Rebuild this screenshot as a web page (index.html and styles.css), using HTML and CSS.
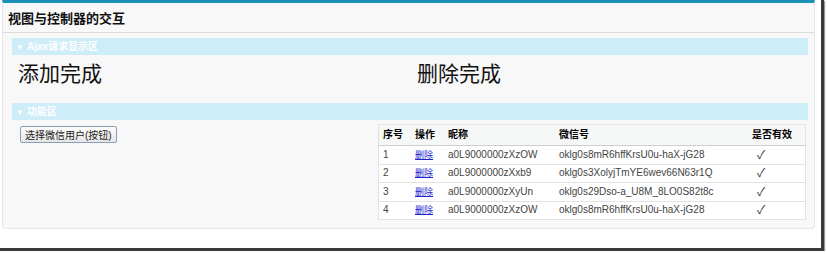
FILE: index.html
```html
<!DOCTYPE html>
<html lang="zh-CN">
  <head>
    <meta charset="UTF-8" />
    <meta name="viewport" content="width=device-width, initial-scale=1.0" />
    <title>视图与控制器的交互</title>
    <link rel="stylesheet" href="styles.css">
  </head>

  <body>
    <div class="frame">
      <div class="panel">
        <!-- 标题栏 -->
        <div class="panel-head">
          <h2>视图与控制器的交互</h2>
        </div>

        <div class="panel-body">
          <!-- Ajax请求显示区 -->
          <div class="section-bar"><span class="arrow">▼</span>Ajax请求显示区</div>
          <div class="result-row">
            <div class="result">添加完成</div>
            <div class="result">删除完成</div>
          </div>

          <!-- 功能区 -->
          <div class="section-bar"><span class="arrow">▼</span>功能区</div>
          <div class="func-row">
            <div class="func-left">
              <button class="btn">选择微信用户(按钮)</button>
            </div>

            <table class="list">
              <thead>
                <tr>
                  <th class="c-no">序号</th>
                  <th class="c-op">操作</th>
                  <th class="c-name">昵称</th>
                  <th class="c-wx">微信号</th>
                  <th class="c-ok">是否有效</th>
                </tr>
              </thead>
              <tbody>
                <tr>
                  <td>1</td>
                  <td><a href="#">删除</a></td>
                  <td>a0L9000000zXzOW</td>
                  <td>oklg0s8mR6hffKrsU0u-haX-jG28</td>
                  <td class="check">✓</td>
                </tr>
                <tr>
                  <td>2</td>
                  <td><a href="#">删除</a></td>
                  <td>a0L9000000zXxb9</td>
                  <td>oklg0s3XolyjTmYE6wev66N63r1Q</td>
                  <td class="check">✓</td>
                </tr>
                <tr>
                  <td>3</td>
                  <td><a href="#">删除</a></td>
                  <td>a0L9000000zXyUn</td>
                  <td>oklg0s29Dso-a_U8M_8LO0S82t8c</td>
                  <td class="check">✓</td>
                </tr>
                <tr>
                  <td>4</td>
                  <td><a href="#">删除</a></td>
                  <td>a0L9000000zXzOW</td>
                  <td>oklg0s8mR6hffKrsU0u-haX-jG28</td>
                  <td class="check">✓</td>
                </tr>
              </tbody>
            </table>
          </div>
        </div>
      </div>
    </div>
  </body>
</html>
```

FILE: styles.css
```css
body {
  margin: 0;
  background-color: #fff;
  font-family: Arial, "Liberation Sans", "Noto Sans CJK SC", sans-serif;
  color: #333;
}

.frame {
  width: 821px;
  height: 248px;
  border-right: 3px solid #3a3a3a;
  border-bottom: 3px solid #3a3a3a;
  box-shadow: 1px 1px 1px #999;
}

.panel {
  margin-left: 2px;
  width: 811px;
  background-color: #f8f8f8;
  border: 1px solid #e4e6e8;
  border-top: 3px solid #1c8fb6;
  border-radius: 0 0 4px 4px;
  padding-bottom: 8px;
}

.panel-head {
  height: 29px;
  padding: 0 5px;
  display: flex;
  align-items: center;
  border-bottom: 1px solid #dcdcdc;
}

h2 {
  margin: 0;
  font-size: 13px;
  font-weight: bold;
  color: #111;
}

.panel-body {
  padding: 5px 6px 0 9px;
}

.section-bar {
  height: 17px;
  line-height: 17px;
  background-color: #cdedf8;
  color: #fff;
  font-size: 10px;
  font-weight: bold;
  padding-left: 4px;
}

.arrow {
  font-size: 8px;
  margin-right: 3px;
}

.result-row {
  display: grid;
  grid-template-columns: 399px 1fr;
  padding: 6px 6px 16px;
}

.result {
  font-size: 21px;
  line-height: 26px;
  color: #111;
}

.func-row {
  display: flex;
  justify-content: space-between;
  padding: 4px 2px 0 8px;
}

.func-left {
  padding-top: 1px;
}

.btn {
  font-family: Arial, "Liberation Sans", "Noto Sans CJK SC", sans-serif;
  font-size: 10px;
  height: 17px;
  padding: 0 4px;
  color: #222;
  background: linear-gradient(#fdfdfd, #e6e6e6);
  border: 1px solid #8a9db8;
  border-radius: 2px;
}

.list {
  width: 428px;
  border-collapse: collapse;
  background-color: #fff;
  border: 1px solid #e0e3e5;
  font-size: 10px;
}

.list th {
  height: 20px;
  line-height: 14px;
  text-align: left;
  font-size: 10px;
  font-weight: bold;
  color: #000;
  background-color: #f6f7f7;
  border-bottom: 1px solid #cfcfcf;
  padding: 0 4px;
}

.list td {
  height: 17.5px;
  line-height: 12px;
  padding: 0 4px;
  border-bottom: 1px solid #e3e3e3;
  color: #444;
}

.c-no { width: 24px; }
.c-op { width: 25px; }
.c-name { width: 103px; }
.c-wx { width: 185px; }

.list a {
  color: #2222cc;
  font-size: 9px;
}

.check {
  color: #000;
  font-size: 12px;
  padding-left: 9px !important;
}
```
